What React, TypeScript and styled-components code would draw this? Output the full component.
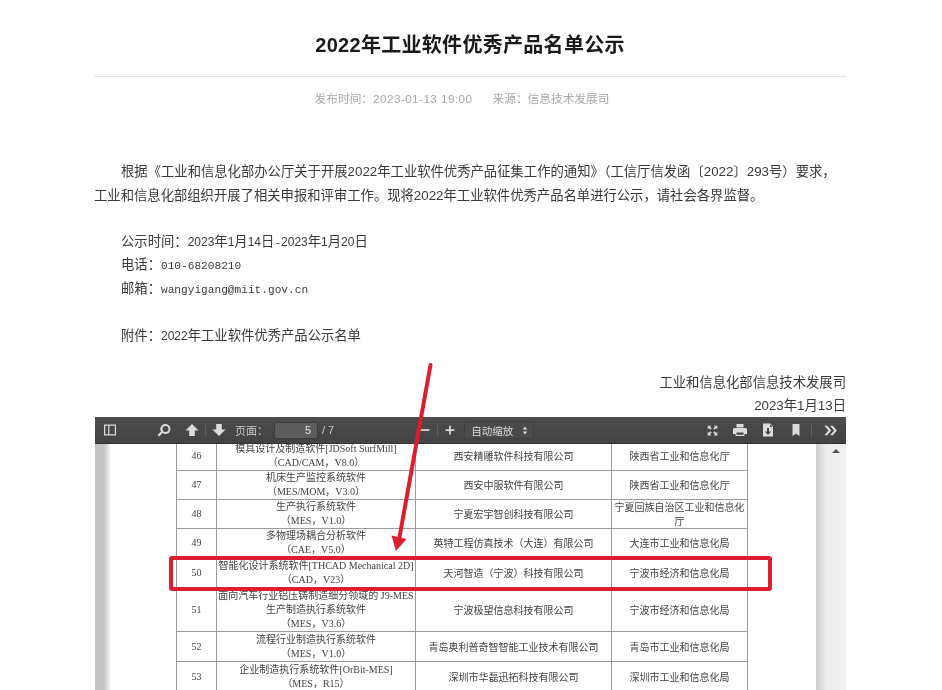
import { ReactNode } from 'react'
import styled, { createGlobalStyle } from 'styled-components'

const GlobalStyle = createGlobalStyle`
	html, body {
		margin: 0;
		padding: 0;
		background: #fff;
	}
	body {
		font-family: 'Liberation Sans', 'Noto Sans CJK SC', sans-serif;
	}
`

const Screen = styled.div`
	position: relative;
	width: 942px;
	height: 690px;
	overflow: hidden;
	background: #fff;
`

const Article = styled.div`
	width: 752px;
	margin-left: 94px;
	filter: blur(0.3px);
`

const Title = styled.h1`
	margin: 0;
	height: 77px;
	box-sizing: border-box;
	border-bottom: 1px solid #e3e3e3;
	padding-top: 30px;
	font-size: 20px;
	line-height: 30px;
	font-weight: 700;
	letter-spacing: 0.3px;
	text-align: center;
	color: #1a1a1a;
`

const Meta = styled.div`
	display: flex;
	justify-content: center;
	gap: 20px;
	margin-top: 13px;
	padding-right: 16px;
	font-size: 11.7px;
	line-height: 18px;
	color: #a8a8a8;
`

const MetaDate = styled.span`
	letter-spacing: 0.45px;
`

const Body = styled.div`
	height: 257px;
	margin-top: 52px;
	font-size: 13.33px;
	line-height: 23.5px;
	color: #3a3a3a;
`

const Lead = styled.p`
	margin: 0 0 22.5px;
	text-indent: 27px;
`

const Indented = styled.p<{ $after?: boolean }>`
	margin: 0 0 ${p => (p.$after ? '23.5px' : '0')};
	padding-left: 27px;
`

const Mono = styled.span`
	font-family: 'Liberation Mono', 'Noto Sans CJK SC', monospace;
	font-size: 11.15px;
	line-height: 1;
`

const Digits = styled.span`
	font-size: 12px;
	line-height: 1;
`

const Sign = styled.p`
	margin: 0;
	text-align: right;
`

const Viewer = styled.div`
	display: flex;
	flex-direction: column;
	width: 751px;
	height: 273px;
	margin: 0 0 0 95px;
	filter: blur(0.45px);
`

const Toolbar = styled.div`
	display: flex;
	align-items: center;
	flex: 0 0 26px;
	box-sizing: border-box;
	padding: 0 3px 0 2px;
	background: linear-gradient(#4c4c4c, #434343);
	border-bottom: 1px solid #333;
	color: #dcdcdc;
	font-size: 11px;
`

const ToolButton = styled.div<{ $gap?: number; $width?: number }>`
	display: flex;
	align-items: center;
	justify-content: center;
	flex: 0 0 ${p => p.$width ?? 26}px;
	height: 26px;
	margin-left: ${p => p.$gap ?? 0}px;
`

const ToolSeparator = styled.div`
	flex: 0 0 1px;
	height: 14px;
	background: #5f5f5f;
`

const ToolLabel = styled.span<{ $gap: number }>`
	margin-left: ${p => p.$gap}px;
	white-space: nowrap;
	color: #c9c9c9;
`

const PageInput = styled.div`
	flex: 0 0 44px;
	height: 17px;
	margin-left: 6px;
	box-sizing: border-box;
	padding-right: 6px;
	border-radius: 2px;
	background: #5c5c5c;
	border: 1px solid #3d3d3d;
	font-size: 11px;
	line-height: 15px;
	text-align: right;
	color: #e2e2e2;
`

const ZoomSelect = styled.div`
	display: flex;
	align-items: center;
	justify-content: space-between;
	flex: 0 0 70px;
	height: 18px;
	margin-left: 2px;
	box-sizing: border-box;
	padding: 0 5px 0 6px;
	border: 1px solid #3f3f3f;
	border-radius: 2px;
	background: #4a4a4a;
	font-size: 10.5px;
	white-space: nowrap;
`

const RightTools = styled.div`
	display: flex;
	align-items: center;
	gap: 2px;
	margin-left: auto;
`

const Scroller = styled.div`
	display: flex;
	flex: 1;
	min-height: 0;
	overflow: hidden;
`

const LeftGutter = styled.div`
	flex: 0 0 15px;
	background: linear-gradient(90deg, #c4c4c4 0, #c4c4c4 9px, #f0f0f0 15px);
`

const Sheet = styled.div`
	flex: 0 0 706px;
	padding-left: 66px;
	box-sizing: border-box;
	background: #fff;
	overflow: hidden;
`

const RightGutter = styled.div`
	display: flex;
	justify-content: flex-end;
	flex: 0 0 30px;
	background: linear-gradient(90deg, #cfcfcf 0, #ececec 10px, #f1f1f1 100%);
`

const ScrollArrow = styled.div`
	width: 0;
	height: 0;
	margin: 5px 6px 0 0;
	border-left: 4px solid transparent;
	border-right: 4px solid transparent;
	border-bottom: 4px solid #555;
`

const PdfTable = styled.table`
	width: 571px;
	margin-top: -3px;
	table-layout: fixed;
	border-collapse: collapse;
	font-family: 'Liberation Serif', 'Noto Sans CJK SC', serif;
	font-size: 10px;
	line-height: 14px;
	color: #444;
`

const Cell = styled.td`
	padding: 0;
	border: 1px solid #9c9c9c;
	text-align: center;
	vertical-align: middle;
`

const CompanyCell = styled(Cell)`
	font-family: 'Noto Sans CJK SC', sans-serif;
`

const DeptCell = styled(Cell)`
	padding: 0 2px;
	font-family: 'Noto Sans CJK SC', sans-serif;
`

const Line = styled.div`
	white-space: nowrap;
`

const Markup = styled.svg`
	position: absolute;
	left: 0;
	top: 0;
	pointer-events: none;
`

type Row = {
	no: number
	height: number
	name: string[]
	company: string
	dept: string
}

const rows: Row[] = [
	{ no: 46, height: 29, name: ['模具设计及制造软件[JDSoft SurfMill]', '（CAD/CAM，V8.0）'], company: '西安精雕软件科技有限公司', dept: '陕西省工业和信息化厅' },
	{ no: 47, height: 29, name: ['机床生产监控系统软件', '（MES/MOM，V3.0）'], company: '西安中服软件有限公司', dept: '陕西省工业和信息化厅' },
	{ no: 48, height: 29, name: ['生产执行系统软件', '（MES，V1.0）'], company: '宁夏宏宇智创科技有限公司', dept: '宁夏回族自治区工业和信息化厅' },
	{ no: 49, height: 29, name: ['多物理场耦合分析软件', '（CAE，V5.0）'], company: '英特工程仿真技术（大连）有限公司', dept: '大连市工业和信息化局' },
	{ no: 50, height: 30, name: ['智能化设计系统软件[THCAD Mechanical 2D]', '（CAD，V23）'], company: '天河智造（宁波）科技有限公司', dept: '宁波市经济和信息化局' },
	{ no: 51, height: 44, name: ['面向汽车行业铝压铸制造细分领域的 J9-MES', '生产制造执行系统软件', '（MES，V3.6）'], company: '宁波极望信息科技有限公司', dept: '宁波市经济和信息化局' },
	{ no: 52, height: 30, name: ['流程行业制造执行系统软件', '（MES，V1.0）'], company: '青岛奥利普奇智智能工业技术有限公司', dept: '青岛市工业和信息化局' },
	{ no: 53, height: 30, name: ['企业制造执行系统软件[OrBit-MES]', '（MES，R15）'], company: '深圳市华磊迅拓科技有限公司', dept: '深圳市工业和信息化局' },
]

const Icon = ({ children, w = 16, h = 16 }: { children: ReactNode; w?: number; h?: number }) => (
	<svg width={w} height={h} viewBox="0 0 16 16" fill="currentColor">
		{children}
	</svg>
)

const App = () => {
	return (
		<Screen lang="zh-CN">
			<GlobalStyle />
			<Article>
				<Title>2022年工业软件优秀产品名单公示</Title>
				<Meta>
					<span>
						发布时间：<MetaDate>2023-01-13 19:00</MetaDate>
					</span>
					<span>来源：信息技术发展司</span>
				</Meta>
				<Body>
					<Lead>
						根据《工业和信息化部办公厅关于开展2022年工业软件优秀产品征集工作的通知》（工信厅信发函〔2022〕293号）要求，工业和信息化部组织开展了相关申报和评审工作。现将2022年工业软件优秀产品名单进行公示，请社会各界监督。
					</Lead>
					<Indented>
						公示时间：<Digits>2023</Digits>年<Digits>1</Digits>月<Digits>14</Digits>日<Mono>-</Mono><Digits>2023</Digits>年<Digits>1</Digits>月<Digits>20</Digits>日
					</Indented>
					<Indented>
						电话：<Mono>010-68208210</Mono>
					</Indented>
					<Indented $after>
						邮箱：<Mono>wangyigang@miit.gov.cn</Mono>
					</Indented>
					<Indented $after>
						附件：<Digits>2022</Digits>年工业软件优秀产品公示名单
					</Indented>
					<Sign>工业和信息化部信息技术发展司</Sign>
					<Sign>2023年1月13日</Sign>
				</Body>
			</Article>
			<Viewer>
				<Toolbar>
					<ToolButton>
						<Icon>
							<path fillRule="evenodd" d="M2 2.500h12v11H2zM3.200 3.700v8.600h3V3.700zM7.400 3.700v8.600h5.400V3.700z" />
						</Icon>
					</ToolButton>
					<ToolButton $gap={28}>
						<Icon>
							<path fillRule="evenodd" d="M9.500 2a5 5 0 1 1-2.900 9.100L3 14.600 1.500 13.100l3.500-3.600A5 5 0 0 1 9.500 2zm0 2a3 3 0 1 0 0 6 3 3 0 0 0 0-6z" />
						</Icon>
					</ToolButton>
					<ToolButton $gap={2}>
						<Icon>
							<path d="M8 2l6.500 6.500H10.800V14H5.200V8.500H1.500z" />
						</Icon>
					</ToolButton>
					<ToolSeparator />
					<ToolButton>
						<Icon>
							<path d="M8 14L1.500 7.500h3.700V2h5.600v5.500h3.700z" />
						</Icon>
					</ToolButton>
					<ToolLabel $gap={3}>页面：</ToolLabel>
					<PageInput>5</PageInput>
					<ToolLabel $gap={4}>/ 7</ToolLabel>
					<ToolButton $gap={79} $width={24}>
						<Icon w={14} h={14}>
							<path d="M3 7h10v2H3z" />
						</Icon>
					</ToolButton>
					<ToolSeparator />
					<ToolButton $width={24}>
						<Icon w={14} h={14}>
							<path d="M7 3h2v4h4v2H9v4H7V9H3V7h4z" />
						</Icon>
					</ToolButton>
					<ZoomSelect>
						<span>自动缩放</span>
						<svg width="6" height="9" viewBox="0 0 6 9" fill="currentColor">
							<path d="M3 0.500l2.200 3H0.800zM3 8.500l-2.200-3h4.400z" />
						</svg>
					</ZoomSelect>
					<RightTools>
						<ToolButton>
							<Icon w={13} h={13}>
								<path d="M2 2h4.500L5 3.500 7 5.500 5.500 7 3.500 5 2 6.500zM14 2v4.500L12.500 5 10.500 7 9 5.500 11 3.500 9.500 2zM2 14V9.500L3.500 11 5.500 9 7 10.500 5 12.500 6.500 14zM14 14H9.500L11 12.500 9 10.500 10.500 9 12.500 11 14 9.500z" />
							</Icon>
						</ToolButton>
						<ToolButton>
							<Icon>
								<path fillRule="evenodd" d="M4.500 2h7v3.500h-7zM2.500 6h11c.8 0 1.500.7 1.500 1.500V12h-2.500v2h-9v-2H1V7.500C1 6.700 1.700 6 2.500 6zM4.500 10.500v2.200h7v-2.200z" />
							</Icon>
						</ToolButton>
						<ToolButton>
							<Icon>
								<path fillRule="evenodd" d="M3 1.500h7l3 3V14.500H3zM7 6v3.500H5L8 13l3-3.500H9V6zM10 2.500V5h2.500z" />
							</Icon>
						</ToolButton>
						<ToolButton>
							<Icon>
								<path d="M4.500 2h7v12L8 11.500 4.500 14z" />
							</Icon>
						</ToolButton>
						<ToolSeparator />
						<ToolButton $gap={3}>
							<Icon w={15} h={15}>
								<path d="M1.500 3h3l4.300 5-4.300 5h-3l4.300-5zM7.500 3h3L14.800 8l-4.300 5h-3L11.800 8z" />
							</Icon>
						</ToolButton>
					</RightTools>
				</Toolbar>
				<Scroller>
					<LeftGutter />
					<Sheet>
						<PdfTable>
							<colgroup>
								<col width={40} />
								<col width={199} />
								<col width={196} />
								<col width={136} />
							</colgroup>
							<tbody>
								{rows.map(row => (
									<tr key={row.no} style={{ height: row.height }}>
										<Cell>{row.no}</Cell>
										<Cell>
											{row.name.map(line => (
												<Line key={line}>{line}</Line>
											))}
										</Cell>
										<CompanyCell>{row.company}</CompanyCell>
										<DeptCell>{row.dept}</DeptCell>
									</tr>
								))}
							</tbody>
						</PdfTable>
					</Sheet>
					<RightGutter>
						<ScrollArrow />
					</RightGutter>
				</Scroller>
			</Viewer>
			<Markup width="942" height="690" viewBox="0 0 942 690">
				<rect x="171" y="558" width="599" height="31" rx="1" fill="none" stroke="#dc1f2e" strokeWidth="4" />
				<line x1="430.500" y1="365" x2="399" y2="540" stroke="#dc1f2e" strokeWidth="4" strokeLinecap="round" />
				<path d="M391.500 535.500L406.500 539L396 551z" fill="#dc1f2e" />
			</Markup>
		</Screen>
	)
}

export default App
